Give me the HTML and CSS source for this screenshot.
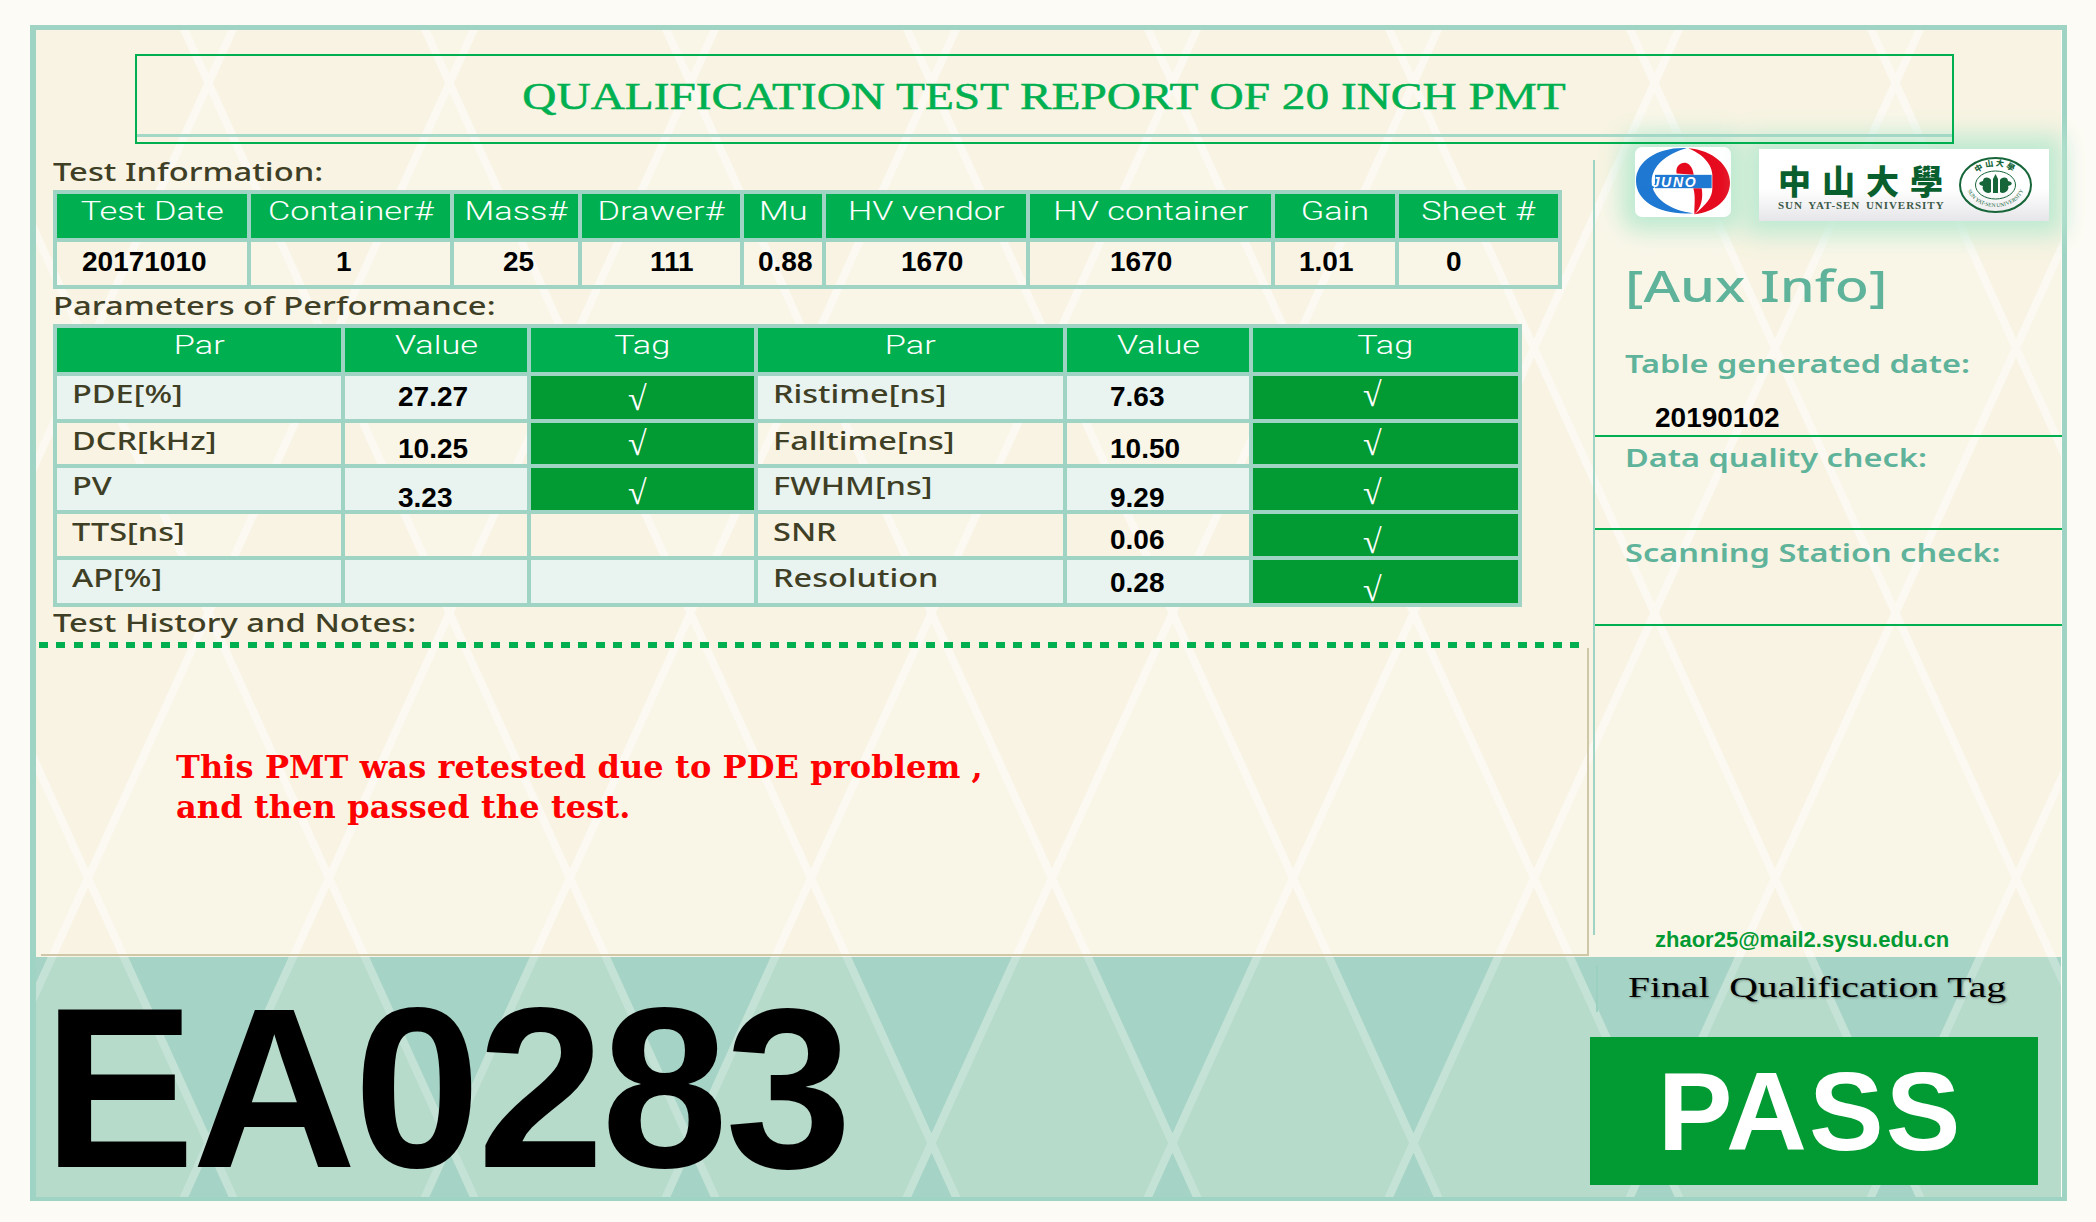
FILE: index.html
```html
<!DOCTYPE html>
<html lang="en">
<head>
    <meta charset="UTF-8">
    <title>Qualification Test Report of 20 Inch PMT</title>
    <link rel="stylesheet" href="styles.css">
</head>
<body>
    <div class="sheet">
        <svg class="backdrop" width="2025" height="1167">
            <defs>
                <pattern id="creamTile" width="241" height="530" patternUnits="userSpaceOnUse" patternTransform="translate(52 318)">
                    <rect width="241" height="530" fill="#f9f6e8"/>
                    <path d="M0 0L120.5 265L0 530ZM241 0L120.5 265L241 530Z" fill="#f8f3e2"/>
                    <path d="M-60 -132L301 662M181 -132L542 662M-301 -132L60 662M301 -132L-60 662M60 -132L-301 662M542 -132L181 662" stroke="#fcf9f2" stroke-width="8" fill="none"/>
                </pattern>
                <pattern id="bandTile" width="241" height="530" patternUnits="userSpaceOnUse" patternTransform="translate(52 318)">
                    <rect width="241" height="530" fill="#a5d3c6"/>
                    <path d="M0 0L120.5 265L0 530ZM241 0L120.5 265L241 530Z" fill="#b6dbcb"/>
                    <path d="M-60 -132L301 662M181 -132L542 662M-301 -132L60 662M301 -132L-60 662M60 -132L-301 662M542 -132L181 662" stroke="#c4e2d6" stroke-width="8" fill="none"/>
                </pattern>
            </defs>
            <rect width="2025" height="927" fill="url(#creamTile)"/>
            <rect y="927" width="2025" height="240" fill="url(#bandTile)"/>
        </svg>

        <div class="upper">
            <div class="title-box">
                <h1 class="title-inner"><span>QUALIFICATION TEST REPORT OF 20 INCH PMT</span></h1>
            </div>

            <div class="main">
                <div class="left">
                    <h2 class="label label-info"><span>Test Information:</span></h2>
                    <table class="info">
                        <colgroup>
                            <col class="i1"><col class="i2"><col class="i3"><col class="i4"><col class="i5"><col class="i6"><col class="i7"><col class="i8"><col class="i9">
                        </colgroup>
                        <tr class="head">
                            <th><span>Test Date</span></th>
                            <th><span>Container#</span></th>
                            <th><span>Mass#</span></th>
                            <th><span>Drawer#</span></th>
                            <th><span>Mu</span></th>
                            <th><span>HV vendor</span></th>
                            <th><span>HV container</span></th>
                            <th><span>Gain</span></th>
                            <th><span>Sheet #</span></th>
                        </tr>
                        <tr class="values">
                            <td>20171010</td>
                            <td>1</td>
                            <td>25</td>
                            <td>111</td>
                            <td>0.88</td>
                            <td>1670</td>
                            <td>1670</td>
                            <td>1.01</td>
                            <td>0</td>
                        </tr>
                    </table>

                    <h2 class="label label-perf"><span>Parameters of Performance:</span></h2>
                    <table class="perf">
                        <colgroup>
                            <col class="p1"><col class="p2"><col class="p3"><col class="p4"><col class="p5"><col class="p6">
                        </colgroup>
                        <tr class="head">
                            <th><span>Par</span></th>
                            <th><span>Value</span></th>
                            <th><span>Tag</span></th>
                            <th><span>Par</span></th>
                            <th><span>Value</span></th>
                            <th><span>Tag</span></th>
                        </tr>
                        <tr class="row-1 tint">
                            <td><div class="cell name"><span>PDE[%]</span></div></td>
                            <td><div class="cell val">27.27</div></td>
                            <td class="tag"><div class="cell check check-l low">√</div></td>
                            <td><div class="cell name"><span>Ristime[ns]</span></div></td>
                            <td><div class="cell val val-r">7.63</div></td>
                            <td class="tag"><div class="cell check check-r">√</div></td>
                        </tr>
                        <tr class="row-2">
                            <td><div class="cell name"><span>DCR[kHz]</span></div></td>
                            <td><div class="cell val">10.25</div></td>
                            <td class="tag"><div class="cell check check-l">√</div></td>
                            <td><div class="cell name"><span>Falltime[ns]</span></div></td>
                            <td><div class="cell val val-r">10.50</div></td>
                            <td class="tag"><div class="cell check check-r">√</div></td>
                        </tr>
                        <tr class="row-3 tint">
                            <td><div class="cell name"><span>PV</span></div></td>
                            <td><div class="cell val">3.23</div></td>
                            <td class="tag"><div class="cell check check-l">√</div></td>
                            <td><div class="cell name"><span>FWHM[ns]</span></div></td>
                            <td><div class="cell val val-r">9.29</div></td>
                            <td class="tag"><div class="cell check check-r">√</div></td>
                        </tr>
                        <tr class="row-4">
                            <td><div class="cell name"><span>TTS[ns]</span></div></td>
                            <td><div class="cell"></div></td>
                            <td><div class="cell"></div></td>
                            <td><div class="cell name"><span>SNR</span></div></td>
                            <td><div class="cell val val-r">0.06</div></td>
                            <td class="tag"><div class="cell check check-r">√</div></td>
                        </tr>
                        <tr class="row-5 tint">
                            <td><div class="cell name"><span>AP[%]</span></div></td>
                            <td><div class="cell"></div></td>
                            <td><div class="cell"></div></td>
                            <td><div class="cell name"><span>Resolution</span></div></td>
                            <td><div class="cell val val-r">0.28</div></td>
                            <td class="tag"><div class="cell check check-r">√</div></td>
                        </tr>
                    </table>

                    <h2 class="label label-notes"><span>Test History and Notes:</span></h2>
                    <div class="dots"></div>
                    <div class="notes">
                        <p>This PMT was retested due to PDE problem ,<br>and then passed the test.</p>
                    </div>
                </div>

                <div class="side">
                    <div class="logos">
                        <div class="logo-juno">
                            <svg width="96" height="70" viewBox="0 0 288 207">
                                <path d="M155 2C70 -2 3 40 3 100C3 165 80 205 175 197C105 190 50 150 50 102C50 55 95 18 155 2Z" fill="#1f78d1"/>
                                <path d="M160 2C235 8 285 55 285 105C285 155 240 195 178 200C215 170 232 150 232 122L232 82C232 60 215 25 160 2Z" fill="#e60a1e"/>
                                <path d="M175 122L200 122C205 150 200 180 178 200C178 170 182 145 175 122Z" fill="#e60a1e"/>
                                <path d="M125 78C120 58 136 44 152 46C168 50 174 68 176 82Z" fill="#e60a1e"/>
                                <rect x="60" y="82" width="170" height="40" fill="#1f78d1"/>
                                <path d="M25 117C30 127 62 128 70 92" stroke="#1f78d1" stroke-width="7" fill="none"/>
                                <text class="juno-text" x="50" y="117">JUNO</text>
                            </svg>
                        </div>
                        <div class="logo-sysu">
                            <div class="sysu-names">
                                <div class="sysu-cn">中山大學</div>
                                <div class="sysu-en">SUN YAT-SEN UNIVERSITY</div>
                            </div>
                            <svg class="seal" width="73" height="56" viewBox="0 0 73 56">
                                <defs>
                                    <path id="sealTop" d="M13 28A23.5 19 0 0 1 60 28"/>
                                    <path id="sealLow" d="M7 26A29.5 24 0 0 0 66 26"/>
                                </defs>
                                <ellipse cx="36.5" cy="28" rx="35.5" ry="27" fill="none" stroke="#17663a" stroke-width="2"/>
                                <ellipse cx="36.5" cy="28" rx="20" ry="14" fill="none" stroke="#17663a" stroke-width="1"/>
                                <text class="seal-cn"><textPath href="#sealTop" startOffset="50%">中山大學</textPath></text>
                                <text class="seal-en"><textPath href="#sealLow" startOffset="50%">SUN YAT-SEN UNIVERSITY</textPath></text>
                                <path d="M24 24C24 19 31 20 32 23L32 35C28 38 22 33 24 29C19 28 19 25 24 24ZM49 24C49 19 42 20 41 23L41 35C45 38 51 33 49 29C54 28 54 25 49 24Z" fill="#17663a"/>
                                <path d="M34 36L34 22L36.5 17L39 22L39 36Z" fill="#17663a"/>
                            </svg>
                        </div>
                    </div>
                    <div class="aux-title"><span>[Aux Info]</span></div>
                    <div class="aux-block aux-date">
                        <div class="aux-label"><span>Table generated date:</span></div>
                        <div class="aux-value">20190102</div>
                    </div>
                    <div class="aux-block aux-quality">
                        <div class="aux-label"><span>Data quality check:</span></div>
                    </div>
                    <div class="aux-block aux-station">
                        <div class="aux-label"><span>Scanning Station check:</span></div>
                    </div>
                    <div class="email">zhaor25@mail2.sysu.edu.cn</div>
                </div>
            </div>
        </div>

        <div class="band">
            <div class="serial">EA0283</div>
            <div class="verdict">
                <div class="final-tag"><span>Final&nbsp; Qualification Tag</span></div>
                <div class="pass">PASS</div>
            </div>
        </div>
    </div>
</body>
</html>
```

FILE: styles.css
```css
* {
    box-sizing: border-box;
}
body {
    margin: 0;
    background-color: #fdfbf5;
    font-family: "Noto Sans", sans-serif;
}
.sheet {
    position: relative;
    isolation: isolate;
    width: 2037px;
    height: 1176px;
    margin: 25px 0 0 30px;
    border-style: solid;
    border-color: #9fd4c4;
    border-width: 5px 5px 4px 6px;
}
.backdrop {
    position: absolute;
    top: 0;
    left: 0;
    z-index: -1;
}
.upper {
    height: 927px;
    padding-top: 24px;
}

/* title */
.title-box {
    position: relative;
    z-index: 1;
    width: 1819px;
    height: 90px;
    margin-left: 99px;
    border: 2px solid #00b050;
}
.title-inner {
    height: 81px;
    margin: 0;
    padding-top: 18px;
    border-bottom: 3px solid #a3d8c6;
    font-family: "Liberation Serif", serif;
    font-size: 38px;
    font-weight: normal;
    line-height: 44px;
    text-align: center;
    color: #00b050;
}
.title-inner span {
    display: inline-block;
    transform: scaleX(1.245);
    -webkit-text-stroke: 0.5px #00b050;
}

.main {
    display: flex;
    height: 813px;
}
.left {
    width: 1557px;
    padding-left: 17px;
}

/* section labels */
.label {
    margin: 0;
    font-size: 25px;
    font-weight: 500;
    line-height: 30px;
    color: #3f3f26;
}
.label span {
    display: inline-block;
    white-space: nowrap;
    transform: scaleX(1.31);
    transform-origin: left;
}
.name span {
    display: inline-block;
    white-space: nowrap;
    transform: scaleX(1.3);
    transform-origin: left;
}
.label-info {
    height: 46px;
    padding-top: 12px;
}
.label-perf {
    height: 35px;
    padding-top: 1px;
}
.label-notes {
    height: 35px;
}

/* tables */
table {
    border-collapse: collapse;
    table-layout: fixed;
}
th, td {
    padding: 0;
    border: 4px solid #9fd4c4;
    vertical-align: top;
}
.info {
    width: 1509px;
}
.perf {
    width: 1469px;
}
.i1 { width: 194px; }
.i2 { width: 203px; }
.i3 { width: 128px; }
.i4 { width: 162px; }
.i5 { width: 82px; }
.i6 { width: 204px; }
.i7 { width: 245px; }
.i8 { width: 124px; }
.i9 { width: 163px; }
.p1 { width: 288px; }
.p2 { width: 186px; }
.p3 { width: 227px; }
.p4 { width: 309px; }
.p5 { width: 186px; }
.p6 { width: 269px; }
.head {
    height: 48px;
}
.head th {
    padding-top: 2px;
    background-color: #00b050;
    font-family: Roboto, sans-serif;
    font-size: 26px;
    font-weight: 300;
    line-height: 30px;
    color: #fff;
}
.head span {
    display: inline-block;
    white-space: nowrap;
    transform: scaleX(1.32);
}
.values {
    height: 47px;
}
.values td {
    padding-top: 5px;
    font-family: "Liberation Sans", sans-serif;
    font-size: 28px;
    font-weight: bold;
    line-height: 30px;
    color: #000;
}
.values td:nth-child(1) { padding-left: 25px; }
.values td:nth-child(2) { padding-left: 85px; }
.values td:nth-child(3) { padding-left: 49px; }
.values td:nth-child(4) { padding-left: 68px; }
.values td:nth-child(5) { padding-left: 14px; }
.values td:nth-child(6) { padding-left: 75px; }
.values td:nth-child(7) { padding-left: 80px; }
.values td:nth-child(8) { padding-left: 24px; }
.values td:nth-child(9) { padding-left: 47px; }

.row-1 { height: 47px; --h: 43px; --v: 6px; --c: 2px; }
.row-2 { height: 45px; --h: 41px; --v: 11px; --c: 4px; }
.row-3 { height: 46px; --h: 42px; --v: 15px; --c: 8px; }
.row-4 { height: 46px; --h: 42px; --v: 11px; --c: 11px; }
.row-5 { height: 47px; --h: 43px; --v: 8px; --c: 13px; }
.tint td {
    background-color: #e9f4f0;
}
.cell {
    height: var(--h);
}
.name {
    padding: 2px 0 0 15px;
    font-size: 25px;
    font-weight: 500;
    line-height: 30px;
    color: #3f3f26;
}
.val {
    padding: var(--v) 0 0 53px;
    font-family: "Liberation Sans", sans-serif;
    font-size: 28px;
    font-weight: bold;
    line-height: 30px;
    color: #000;
}
.val-r {
    padding-left: 43px;
}
.tint td.tag,
.tag {
    background-color: #029a33;
}
.tag .cell {
    height: calc(var(--h) + 2px);
    margin: -1px 0;
    background-color: #029a33;
}
.check {
    padding-top: var(--c);
    font-family: "Liberation Serif", serif;
    font-size: 34px;
    line-height: 36px;
    color: #fff;
}
.check-l {
    padding-left: 97px;
}
.check-r {
    padding-left: 110px;
}
.low {
    padding-top: 6px;
}

/* notes */
.dots {
    width: 1549px;
    height: 6px;
    margin-left: -14px;
    background-image: repeating-linear-gradient(90deg, #00b050 0, #00b050 9px, transparent 9px, transparent 17.4px);
}
.notes {
    width: 1548px;
    height: 308px;
    margin-left: -12px;
    padding: 99px 0 0 135px;
    border-right: 2px solid #cfc8a8;
    border-bottom: 2px solid #cfc8a8;
}
.notes p {
    margin: 0;
    font-family: "DejaVu Serif", serif;
    font-size: 32px;
    font-weight: bold;
    line-height: 40px;
    white-space: nowrap;
    letter-spacing: 0.1px;
    color: #ff0000;
}

/* right column */
.side {
    display: flex;
    flex-direction: column;
    flex: 1;
    height: 775px;
    margin-top: 16px;
    border-left: 2px solid #9fd4c4;
}
.logos {
    display: flex;
    align-items: flex-start;
    gap: 28px;
    height: 74px;
    margin: -13px 0 0 40px;
}
.logo-juno {
    width: 96px;
    height: 70px;
    border-radius: 7px;
    background-color: #fff;
    box-shadow: 0 0 22px 14px #bfead2;
}
.logo-juno svg {
    display: block;
}
.juno-text {
    font-family: "Liberation Sans", sans-serif;
    font-size: 42px;
    font-style: italic;
    font-weight: bold;
    letter-spacing: 5px;
    fill: #fff;
}
.logo-sysu {
    display: flex;
    align-items: center;
    width: 290px;
    height: 72px;
    margin-top: 2px;
    padding: 0 0 0 19px;
    background-image: linear-gradient(#fff 55%, #e6e6ea);
    box-shadow: 0 0 22px 14px #bfead2;
}
.sysu-names {
    width: 181px;
    margin-top: 2px;
}
.sysu-cn {
    font-family: "Noto Sans CJK TC", sans-serif;
    font-size: 33px;
    font-weight: 900;
    line-height: 38px;
    letter-spacing: 11px;
    color: #0a5f2f;
}
.sysu-en {
    font-family: "Liberation Serif", serif;
    font-size: 11px;
    font-weight: bold;
    line-height: 13px;
    letter-spacing: 0.95px;
    word-spacing: 2px;
    white-space: nowrap;
    color: #3c5a48;
}
.seal-cn {
    font-family: "Noto Sans CJK TC", sans-serif;
    font-size: 8px;
    font-weight: 900;
    letter-spacing: 2px;
    text-anchor: middle;
    fill: #17663a;
}
.seal-en {
    font-family: "Liberation Serif", serif;
    font-size: 5.5px;
    text-anchor: middle;
    fill: #17663a;
}
.aux-title {
    height: 50px;
    margin-top: 40px;
    padding-left: 30px;
    font-size: 43px;
    font-weight: 500;
    line-height: 50px;
    color: #5fb39a;
}
.aux-title span,
.aux-label span {
    display: inline-block;
    white-space: nowrap;
    transform: scaleX(1.3);
    transform-origin: left;
}
.aux-block {
    border-bottom: 2px solid #00b050;
    padding-left: 30px;
}
.aux-label {
    font-size: 25px;
    font-weight: 600;
    line-height: 30px;
    color: #5fb39a;
}
.aux-date {
    height: 126px;
    padding-top: 37px;
}
.aux-value {
    margin: 25px 0 0 30px;
    font-family: "Liberation Sans", sans-serif;
    font-size: 28px;
    line-height: 30px;
    font-weight: bold;
    color: #000;
}
.aux-quality {
    height: 93px;
    padding-top: 5px;
}
.aux-station {
    height: 96px;
    padding-top: 7px;
}
.email {
    margin-top: auto;
    margin-bottom: -18px;
    padding-left: 60px;
    font-family: "Liberation Sans", sans-serif;
    font-size: 22px;
    font-weight: bold;
    line-height: 26px;
    color: #029a33;
}

/* bottom band */
.band {
    display: flex;
    height: 240px;
}
.serial {
    padding: 17px 0 0 7px;
    font-family: "Liberation Sans", sans-serif;
    font-size: 228px;
    font-weight: bold;
    line-height: 228px;
    letter-spacing: -3px;
    color: #000;
}
.verdict {
    width: 472px;
    margin-left: auto;
}
.final-tag {
    height: 47px;
    margin: 8px 0 0 6px;
    padding: 4px 0 0 30px;
    border-left: 2px solid #9cd0bf;
    font-family: "Liberation Serif", serif;
    font-size: 30px;
    line-height: 36px;
    color: #000;
    text-shadow: 1px 1px 2px rgba(0, 0, 0, 0.35);
}
.final-tag span {
    display: inline-block;
    white-space: nowrap;
    transform: scaleX(1.32);
    transform-origin: left;
}
.pass {
    display: flex;
    align-items: center;
    justify-content: center;
    width: 448px;
    height: 148px;
    margin-top: 25px;
    padding-right: 8px;
    background-color: #029a33;
    font-family: "Liberation Sans", sans-serif;
    font-size: 112px;
    font-weight: bold;
    letter-spacing: 2px;
    color: #fff;
}
```
